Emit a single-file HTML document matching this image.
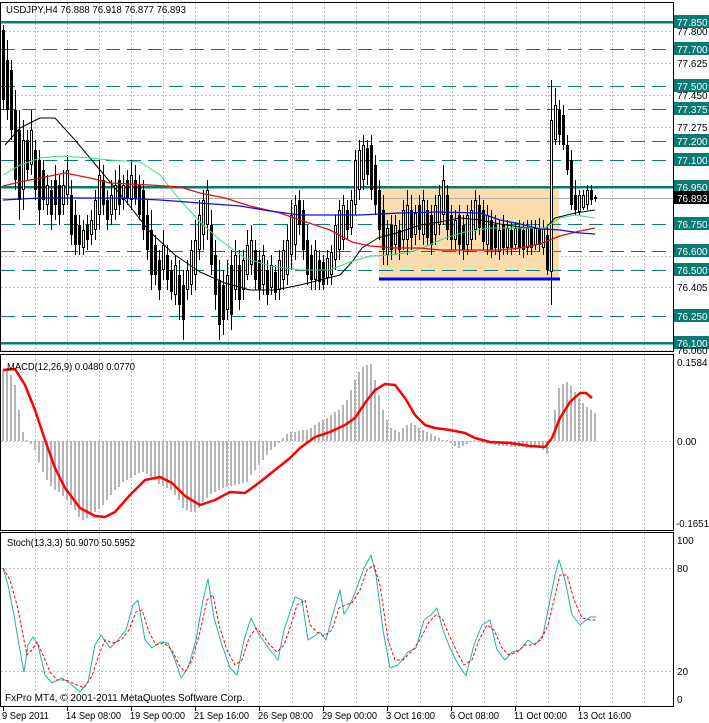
<!DOCTYPE html>
<html><head><meta charset="utf-8">
<style>
html,body{margin:0;padding:0;background:#fff;}
body{width:709px;height:723px;overflow:hidden;}
svg{display:block}
text{font-family:"Liberation Sans",sans-serif;font-size:10px;fill:#000;}
.w{fill:#fff}
</style></head><body>
<svg width="709" height="723" xmlns="http://www.w3.org/2000/svg" shape-rendering="crispEdges">
<rect x="0" y="0" width="709" height="723" fill="#fff"/>
<rect x="0.5" y="2.5" width="673" height="349" fill="none" stroke="#000"/>
<rect x="0.5" y="354.5" width="673" height="176" fill="none" stroke="#000"/>
<rect x="0.5" y="532.5" width="673" height="174" fill="none" stroke="#000"/>
<g stroke="#c0c0c0" stroke-dasharray="2,2">
<path d="M35.5 3V351M67.5 3V351M99.5 3V351M131.5 3V351M163.5 3V351M195.5 3V351M228.5 3V351M259.5 3V351M292.5 3V351M324.5 3V351M356.5 3V351M388.5 3V351M420.5 3V351M452.5 3V351M484.5 3V351M516.5 3V351M548.5 3V351M580.5 3V351M612.5 3V351M644.5 3V351"/>
<path d="M35.5 355V530M67.5 355V530M99.5 355V530M131.5 355V530M163.5 355V530M195.5 355V530M228.5 355V530M259.5 355V530M292.5 355V530M324.5 355V530M356.5 355V530M388.5 355V530M420.5 355V530M452.5 355V530M484.5 355V530M516.5 355V530M548.5 355V530M580.5 355V530M612.5 355V530M644.5 355V530"/>
<path d="M35.5 533V706M67.5 533V706M99.5 533V706M131.5 533V706M163.5 533V706M195.5 533V706M228.5 533V706M259.5 533V706M292.5 533V706M324.5 533V706M356.5 533V706M388.5 533V706M420.5 533V706M452.5 533V706M484.5 533V706M516.5 533V706M548.5 533V706M580.5 533V706M612.5 533V706M644.5 533V706"/>
<path d="M1 31.5H673M1 63.5H673M1 95.5H673M1 127.5H673M1 287.5H673M1 350.5H673M1 256.5H673"/>
<path d="M1 441.5H673M1 568.5H673M1 671.5H673"/>
</g>
<rect x="379" y="187" width="180" height="92" fill="#fbdcad"/>
<path stroke="#0a7a74" stroke-width="1.2" stroke-dasharray="14,7" d="M1 49.5H673M1 86.5H673M1 109.5H673M1 141.5H673M1 160.5H673M1 224.5H673M1 251.5H673M1 270.5H673M1 316.5H673"/>
<path stroke="#0a7a74" stroke-width="2.5" d="M1 22H673M1 187H673M1 343H673"/>
<path stroke="#b0b0b0" d="M1 198.5H673"/>
<path stroke="#000" d="M3.5 25V110M7.5 40V120M11.5 60V140M15.5 90V190M19.5 110V220M23.5 120V210M27.5 130V180M31.5 110V175M35.5 140V200M39.5 150V225M43.5 160V210M47.5 175V215M51.5 180V230M55.5 165V220M59.5 175V225M63.5 170V215M67.5 155V205M71.5 180V245M75.5 200V255M79.5 215V255M83.5 220V255M87.5 215V250M91.5 210V245M95.5 190V240M99.5 160V230M103.5 165V215M107.5 190V230M111.5 180V225M115.5 170V220M119.5 165V215M123.5 175V210M127.5 170V205M131.5 160V210M135.5 165V205M139.5 175V220M143.5 180V240M147.5 200V260M151.5 210V290M155.5 235V285M159.5 250V300M163.5 230V280M167.5 245V290M171.5 260V300M175.5 255V305M179.5 260V320M183.5 270V340M187.5 260V300M191.5 240V295M195.5 220V290M199.5 200V260M203.5 190V250M207.5 180V240M211.5 210V275M215.5 240V310M219.5 260V340M223.5 270V335M227.5 260V320M231.5 250V330M235.5 240V300M239.5 250V310M243.5 250V300M247.5 230V280M251.5 225V275M255.5 240V290M259.5 250V300M263.5 245V295M267.5 260V305M271.5 255V295M275.5 265V300M279.5 250V300M283.5 240V290M287.5 225V285M291.5 200V270M295.5 195V260M299.5 190V235M303.5 200V260M307.5 225V285M311.5 245V290M315.5 240V290M319.5 250V290M323.5 255V290M327.5 250V285M331.5 245V285M335.5 215V270M339.5 200V260M343.5 195V250M347.5 200V240M351.5 190V235M355.5 150V215M359.5 140V200M363.5 135V190M367.5 140V185M371.5 135V200M375.5 155V215M379.5 180V240M383.5 195V265M387.5 220V265M391.5 215V260M395.5 215V255M399.5 220V260M403.5 200V250M407.5 190V255M411.5 195V250M415.5 205V245M419.5 195V240M423.5 190V245M427.5 200V245M431.5 205V255M435.5 195V245M439.5 185V235M443.5 165V225M447.5 185V240M451.5 205V250M455.5 210V250M459.5 205V255M463.5 215V260M467.5 205V255M471.5 200V250M475.5 190V240M479.5 195V235M483.5 200V250M487.5 205V255M491.5 210V258M495.5 215V255M499.5 220V260M503.5 215V255M507.5 220V255M511.5 222V255M515.5 222V250M519.5 220V255M523.5 222V258M527.5 220V255M531.5 220V255M535.5 220V250M539.5 218V252M543.5 220V255M547.5 225V275M551.5 80V305M555.5 88V145M559.5 100V145M563.5 105V150M567.5 135V175M571.5 150V210M575.5 180V215M579.5 190V215M583.5 190V210M587.5 185V210M591.5 185V205M595.5 195V202"/>
<path stroke="#000" stroke-width="3" d="M3.5 30V100M7.5 60V110M11.5 70V130M15.5 110V180M19.5 130V200M23.5 140V190M27.5 140V170M31.5 130V165M35.5 150V190M39.5 160V210M43.5 170V200M47.5 185V205M51.5 190V215M55.5 180V205M59.5 185V215M63.5 185V205M67.5 170V195M71.5 195V235M75.5 215V245M79.5 225V245M83.5 230V248M87.5 225V240M91.5 220V235M95.5 200V230M99.5 175V215M103.5 180V205M107.5 200V220M111.5 195V215M115.5 185V210M119.5 180V205M123.5 185V200M127.5 180V198M131.5 175V200M135.5 180V198M139.5 185V215M143.5 190V230M147.5 215V250M151.5 230V275M155.5 245V275M159.5 260V290M163.5 245V270M167.5 255V280M171.5 270V292M175.5 265V295M179.5 275V305M183.5 285V320M187.5 270V290M191.5 250V285M195.5 240V275M199.5 215V250M203.5 200V235M207.5 190V225M211.5 225V265M215.5 255V295M219.5 280V325M223.5 285V320M227.5 275V310M231.5 265V315M235.5 255V290M239.5 265V300M243.5 260V290M247.5 245V275M251.5 240V265M255.5 250V280M259.5 260V290M263.5 255V285M267.5 270V295M271.5 265V288M275.5 272V293M279.5 260V290M283.5 250V280M287.5 240V275M291.5 215V255M295.5 205V245M299.5 200V225M303.5 210V250M307.5 240V275M311.5 255V280M315.5 250V280M319.5 260V282M323.5 262V285M327.5 258V278M331.5 252V275M335.5 225V260M339.5 210V250M343.5 205V240M347.5 210V230M351.5 200V228M355.5 160V205M359.5 150V190M363.5 145V180M367.5 148V175M371.5 145V190M375.5 165V205M379.5 190V230M383.5 210V250M387.5 228V255M391.5 225V250M395.5 225V245M399.5 230V250M403.5 210V240M407.5 205V240M411.5 210V238M415.5 213V235M419.5 205V230M423.5 200V235M427.5 210V238M431.5 215V245M435.5 205V235M439.5 195V225M443.5 180V215M447.5 195V230M451.5 215V240M455.5 220V240M459.5 215V245M463.5 225V250M467.5 215V245M471.5 210V240M475.5 200V230M479.5 205V228M483.5 210V242M487.5 215V245M491.5 220V250M495.5 225V248M499.5 230V252M503.5 225V248M507.5 228V248M511.5 230V248M515.5 228V245M519.5 228V248M523.5 230V250M527.5 228V248M531.5 228V248M535.5 228V245M539.5 228V245M543.5 228V248M547.5 235V270M551.5 120V272M555.5 105V140M559.5 110V135M563.5 115V145M567.5 145V170M571.5 160V205M575.5 195V210M579.5 195V212M583.5 195V208M587.5 190V205M591.5 190V200M595.5 197V199"/>
<path stroke="#fff" stroke-width="1" d="M23.5 141V189M31.5 131V164M47.5 186V204M63.5 186V204M67.5 171V194M83.5 231V247M91.5 221V234M95.5 201V229M99.5 176V214M111.5 196V214M115.5 186V209M123.5 186V199M131.5 176V199M163.5 246V269M175.5 266V294M187.5 271V289M191.5 251V284M195.5 241V274M199.5 216V249M203.5 201V234M207.5 191V224M227.5 276V309M235.5 256V289M243.5 261V289M247.5 246V274M251.5 241V264M263.5 256V284M271.5 266V287M279.5 261V289M283.5 251V279M287.5 241V274M291.5 216V254M295.5 206V244M315.5 251V279M327.5 259V277M331.5 253V274M335.5 226V259M339.5 211V249M343.5 206V239M351.5 201V227M355.5 161V204M359.5 151V189M363.5 146V179M387.5 229V254M395.5 226V244M403.5 211V239M407.5 206V239M415.5 214V234M423.5 201V234M435.5 206V234M439.5 196V224M443.5 181V214M455.5 221V239M467.5 216V244M471.5 211V239M475.5 201V229M487.5 216V244M499.5 231V251M507.5 229V247M515.5 229V244M527.5 229V247M535.5 229V244M543.5 229V247M551.5 121V271M555.5 106V139M579.5 196V211M583.5 196V207M587.5 191V204"/>
<g fill="none" stroke-linejoin="round" shape-rendering="auto">
<polyline stroke="#000" stroke-width="1" points="5,145 20,128 40,118 55,118 75,140 100,170 125,200 150,232 175,255 200,272 225,283 250,290 275,290 300,285 320,280 340,275 352,262 362,248 378,238 400,232 420,225 440,222 460,218 480,220 500,224 520,227 545,229 555,218 575,213 595,210"/>
<polyline stroke="#33dd88" stroke-width="1" points="3,175 20,165 40,158 60,156 90,158 110,160 140,162 160,175 180,200 200,222 220,240 245,258 270,266 300,270 330,270 350,262 370,256 390,255 410,252 425,247 445,238 465,232 490,228 520,228 545,228 560,218 575,215 595,218"/>
<polyline stroke="#e01010" stroke-width="1.3" points="3,186 20,182 40,178 65,173 90,178 110,183 150,185 180,187 200,193 225,198 250,206 280,213 300,220 330,230 352,242 370,246 395,248 420,248 440,250 470,250 500,250 520,248 540,244 560,236 580,231 595,228"/>
<polyline stroke="#1010e0" stroke-width="1.3" points="3,200 40,198 80,198 120,198 160,200 200,203 240,206 270,211 300,215 330,215 360,215 400,213 440,212 480,213 500,220 520,224 540,229 560,230 580,233 595,234"/>
</g>
<path stroke="#0000ff" stroke-width="3" d="M379 279H560"/>
<g fill="#0a7a74">
<rect x="674" y="15" width="35" height="13"/><rect x="674" y="42" width="35" height="13"/><rect x="674" y="79" width="35" height="13"/><rect x="674" y="102" width="35" height="13"/><rect x="674" y="134" width="35" height="13"/><rect x="674" y="153" width="35" height="13"/><rect x="674" y="180" width="35" height="13"/><rect x="674" y="217" width="35" height="13"/><rect x="674" y="244" width="35" height="13"/><rect x="674" y="263" width="35" height="13"/><rect x="674" y="309" width="35" height="13"/><rect x="674" y="336" width="35" height="13"/>
</g>
<rect x="674" y="191" width="35" height="13" fill="#000"/>
<text x="677" y="26" class="w">77.850</text>
<text x="677" y="35">77.800</text>
<text x="677" y="53" class="w">77.700</text>
<text x="677" y="67">77.625</text>
<text x="677" y="90" class="w">77.500</text>
<text x="677" y="99">77.450</text>
<text x="677" y="113" class="w">77.375</text>
<text x="677" y="131">77.275</text>
<text x="677" y="145" class="w">77.200</text>
<text x="677" y="164" class="w">77.100</text>
<text x="677" y="191" class="w">76.950</text>
<text x="677" y="202" class="w">76.893</text>
<text x="677" y="228" class="w">76.750</text>
<text x="677" y="255" class="w">76.600</text>
<text x="677" y="274" class="w">76.500</text>
<text x="677" y="291">76.405</text>
<text x="677" y="320" class="w">76.250</text>
<text x="677" y="347" class="w">76.100</text>
<text x="677" y="354">76.060</text>
<text x="6" y="13" textLength="180" lengthAdjust="spacingAndGlyphs">USDJPY,H4  76.888 76.918 76.877 76.893</text>
<path stroke="#b4b4b4" stroke-width="2" d="M3 441V370M7 441V368M11 441V375M15 441V385M19 441V410M23 441V432M27 441V440M31 441V444M35 441V450M39 441V462M43 441V472M47 441V480M51 441V486M55 441V490M59 441V492M63 441V496M67 441V500M71 441V505M75 441V510M79 441V517M83 441V520M87 441V518M91 441V515M95 441V512M99 441V509M103 441V505M107 441V500M111 441V495M115 441V490M119 441V487M123 441V482M127 441V480M131 441V478M135 441V475M139 441V473M143 441V472M147 441V474M151 441V477M155 441V480M159 441V484M163 441V486M167 441V488M171 441V490M175 441V495M179 441V500M183 441V508M187 441V510M191 441V512M195 441V512M199 441V508M203 441V502M207 441V498M211 441V494M215 441V492M219 441V490M223 441V488M227 441V487M231 441V486M235 441V485M239 441V484M243 441V483M247 441V482M251 441V475M255 441V470M259 441V465M263 441V460M267 441V455M271 441V450M275 441V447M279 441V443M283 441V438M287 441V434M291 441V432M295 441V432M299 441V431M303 441V430M307 441V430M311 441V428M315 441V425M319 441V422M323 441V420M327 441V418M331 441V415M335 441V412M339 441V410M343 441V405M347 441V400M351 441V390M355 441V380M359 441V372M363 441V367M367 441V365M371 441V364M375 441V380M379 441V395M383 441V410M387 441V420M391 441V428M395 441V430M399 441V432M403 441V428M407 441V425M411 441V423M415 441V425M419 441V428M423 441V430M427 441V432M431 441V434M435 441V436M439 441V438M443 441V440M447 441V440M451 441V443M455 441V446M459 441V448M463 441V446M467 441V444M471 441V442M475 441V440M479 441V442M483 441V443M487 441V444M491 441V444M495 441V445M499 441V446M503 441V446M507 441V446M511 441V447M515 441V447M519 441V447M523 441V447M527 441V448M531 441V448M535 441V447M539 441V448M543 441V450M547 441V454M551 441V440M555 441V410M559 441V388M563 441V384M567 441V382M571 441V386M575 441V392M579 441V398M583 441V403M587 441V407M591 441V410M595 441V413"/>
<polyline fill="none" stroke="#ff0000" stroke-width="2.5" stroke-linejoin="round" shape-rendering="auto" points="3,370 15,369 25,385 35,410 45,440 55,468 65,488 80,508 95,516 105,517 115,512 130,495 145,480 160,477 172,483 185,496 200,505 215,500 230,492 245,493 260,482 275,470 290,458 300,448 315,437 330,432 345,425 355,418 365,403 375,390 385,384 395,385 405,398 415,415 425,425 435,428 450,430 465,433 475,438 490,442 510,443 530,446 545,447 552,438 560,418 570,402 580,393 586,393 592,398"/>
<text x="7" y="370" textLength="128" lengthAdjust="spacingAndGlyphs">MACD(12,26,9) 0.0480 0.0770</text>
<text x="677" y="366">0.1584</text>
<text x="677" y="445">0.00</text>
<text x="676" y="527" textLength="33" lengthAdjust="spacingAndGlyphs">-0.1651</text>
<g fill="none" stroke-linejoin="round" shape-rendering="auto">
<polyline stroke="#20b2aa" stroke-width="1" points="3,568 8,585 14,615 19,645 24,672 28,645 33,637 38,645 45,675 52,683 62,678 72,685 80,692 88,682 95,645 101,635 110,648 118,640 126,630 133,605 138,600 145,640 152,648 160,642 168,643 175,660 181,678 188,668 196,640 203,600 208,579 214,618 222,645 230,668 237,675 244,640 251,618 258,633 263,640 270,650 278,660 284,630 290,612 295,597 302,600 308,640 313,637 320,632 326,640 334,610 340,590 344,614 350,605 358,585 364,568 371,555 376,575 383,630 390,668 398,665 408,652 416,648 424,620 431,615 437,608 443,630 450,648 458,664 466,676 474,645 482,625 490,620 497,650 505,660 512,652 520,650 528,640 535,645 543,635 550,600 555,575 559,560 565,580 572,615 580,625 590,617 596,617"/>
<polyline stroke="#ff0000" stroke-width="1" stroke-dasharray="3,2" points="3,568 10,580 17,605 22,630 27,655 32,650 37,642 43,655 50,672 57,680 66,680 75,684 84,688 92,676 99,655 105,640 113,643 121,640 129,630 136,612 142,610 149,632 156,645 164,643 172,650 179,665 185,672 192,660 200,632 207,600 213,595 219,625 227,650 235,665 242,660 249,638 256,628 262,634 269,644 277,652 284,645 290,628 297,605 305,600 310,625 317,632 324,636 332,630 339,608 345,605 352,603 360,590 367,570 374,565 380,585 388,640 395,660 403,660 413,650 421,638 429,622 436,615 442,618 449,635 456,650 464,665 472,660 479,640 487,625 494,630 502,648 509,655 517,652 525,645 533,645 541,640 548,625 554,600 560,575 567,575 574,600 582,618 590,620 596,620"/>
</g>
<text x="7" y="546" textLength="128" lengthAdjust="spacingAndGlyphs">Stoch(13,3,3) 50.9070 50.5952</text>
<text x="677" y="544">100</text>
<text x="677" y="572">80</text>
<text x="677" y="675">20</text>
<text x="677" y="703">0</text>
<text x="5" y="701" textLength="240" lengthAdjust="spacingAndGlyphs">FxPro MT4, © 2001-2011 MetaQuotes Software Corp.</text>
<path stroke="#000" d="M3.5 707V711M67.5 707V711M131.5 707V711M195.5 707V711M259.5 707V711M323.5 707V711M387.5 707V711M451.5 707V711M515.5 707V711M579.5 707V711"/>
<text x="2" y="719" textLength="47" lengthAdjust="spacingAndGlyphs">9 Sep 2011</text>
<text x="66" y="719" textLength="55" lengthAdjust="spacingAndGlyphs">14 Sep 08:00</text>
<text x="130" y="719" textLength="55" lengthAdjust="spacingAndGlyphs">19 Sep 00:00</text>
<text x="194" y="719" textLength="55" lengthAdjust="spacingAndGlyphs">21 Sep 16:00</text>
<text x="258" y="719" textLength="55" lengthAdjust="spacingAndGlyphs">26 Sep 08:00</text>
<text x="322" y="719" textLength="55" lengthAdjust="spacingAndGlyphs">29 Sep 00:00</text>
<text x="386" y="719" textLength="49" lengthAdjust="spacingAndGlyphs">3 Oct 16:00</text>
<text x="450" y="719" textLength="49" lengthAdjust="spacingAndGlyphs">6 Oct 08:00</text>
<text x="514" y="719" textLength="53" lengthAdjust="spacingAndGlyphs">11 Oct 00:00</text>
<text x="578" y="719" textLength="53" lengthAdjust="spacingAndGlyphs">13 Oct 16:00</text>
</svg>
</body></html>
